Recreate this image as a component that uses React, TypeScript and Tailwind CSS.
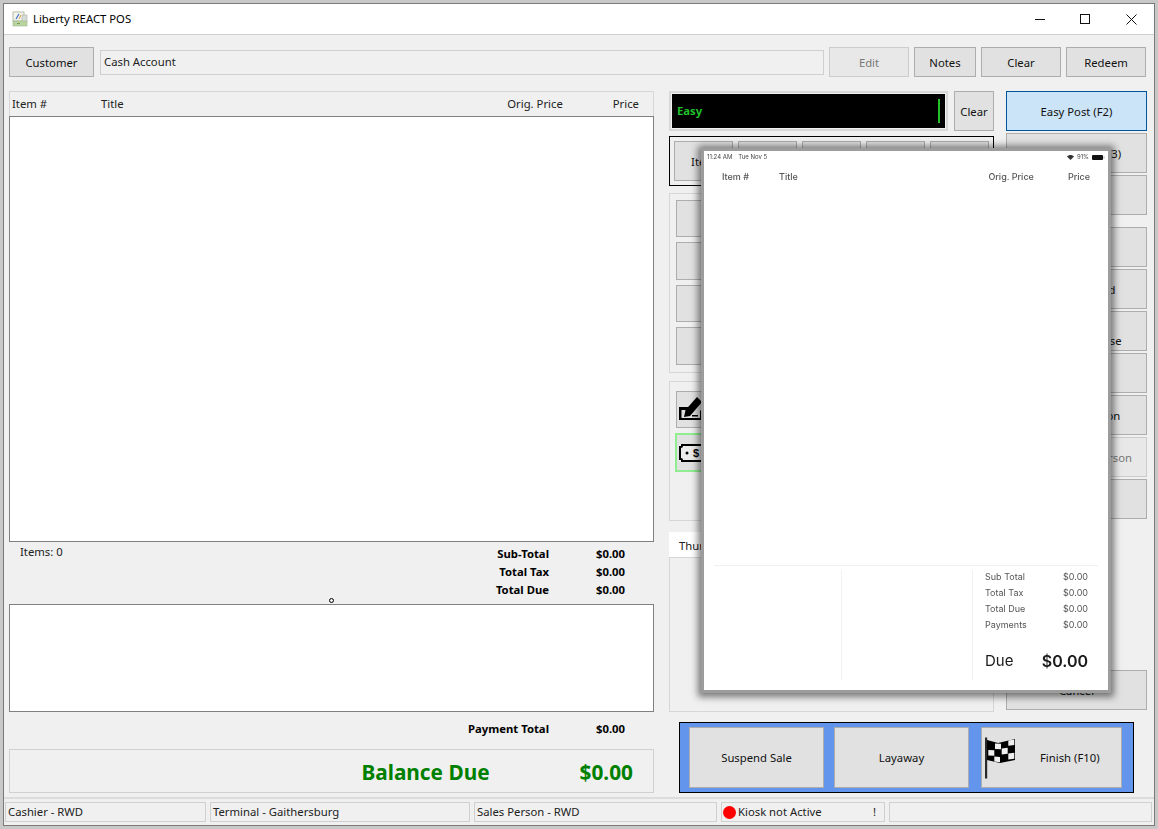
import type { ReactNode } from 'react'

function Btn({ className = '', children, disabled }: { className?: string; children?: ReactNode; disabled?: boolean }) {
  return (
    <button className={`flex flex-col items-center justify-center shrink-0 border pt-[1px] leading-[18px] ${disabled ? 'bg-[#e8e8e8] border-[#cccccc] text-[#777777]' : 'bg-[#e1e1e1] border-[#adadad] text-[#111111]'} ${className}`}>
      {children}
    </button>
  )
}

function TotalRow({ label, value, className = '' }: { label: string; value: string; className?: string }) {
  return (
    <div className={`flex justify-end items-center pr-[29px] ${className}`}>
      <span className="font-bold text-black">{label}</span>
      <span className="ml-[45px] w-[31px] text-right font-bold text-black">{value}</span>
    </div>
  )
}

function AppIcon() {
  return (
    <svg width="16" height="16" viewBox="0 0 16 16" className="shrink-0">
      <rect x="1" y="1" width="11" height="9" fill="#f4f4ee" stroke="#b5bfa6" />
      <path d="M4 8l3-5" stroke="#3a6fc4" strokeWidth="1.2" />
      <path d="M7 8l2-4" stroke="#d9a23a" strokeWidth="1" />
      <rect x="10" y="4" width="5" height="7" fill="#d8dcd8" stroke="#aab0aa" strokeWidth="0.6" />
      <rect x="1" y="10" width="14" height="5" fill="#b9d4a0" stroke="#9db888" strokeWidth="0.6" />
      <rect x="5" y="12" width="3" height="1" fill="#7b9a62" />
    </svg>
  )
}

function FlagIcon() {
  return (
    <svg width="34" height="42" viewBox="0 0 34 42">
      <rect x="1" y="0.500" width="2.200" height="41" fill="#2a2a2a" />
      <path d="M3 3l11 3 17-4v21l-15 3-13-3z" fill="#000" />
      <g fill="#f0f0f0">
        <path d="M11 6.500l6 .3v5.500l-6-.3z" />
        <path d="M17.700 11.500l6-.7v6l-6 .7z" />
        <path d="M24.300 3.500l6-1v5.500l-6 .8z" />
        <path d="M24.300 16.500l6-.8v6l-6 .8z" />
        <path d="M10.300 19.500l5.700.4v5.400l-5.700-.7z" />
        <path d="M4.300 13l6 .3v5.500l-6-.4z" />
      </g>
    </svg>
  )
}

function CheckIcon() {
  return (
    <svg width="24" height="26" viewBox="0 0 24 26">
      <path d="M1 10h10l-3 3H3.500v8H22v-7l2-2v11H1z" fill="#000" />
      <path d="M6 20l1.500-7L19 0l5 5-12 14z" fill="#000" />
      <path d="M14 18h6v1.500h-6z" fill="#000" />
    </svg>
  )
}

function CashIcon() {
  return (
    <svg width="26" height="18" viewBox="0 0 26 18">
      <rect x="0" y="0" width="26" height="18" fill="#000" />
      <path d="M4 2h22v14H4a2 2 0 0 0-2-2V4a2 2 0 0 0 2-2z" fill="#ececec" />
      <rect x="0" y="0" width="2" height="2" fill="#ececec" />
      <rect x="0" y="16" width="2" height="2" fill="#ececec" />
      <circle cx="8" cy="9" r="1.500" fill="#000" />
      <text x="14" y="13" fontSize="11" fontWeight="700" fontFamily="Liberation Sans, sans-serif" fill="#000">$</text>
    </svg>
  )
}

function TabletOverlay() {
  const totals = ['Sub Total', 'Total Tax', 'Total Due', 'Payments']
  return (
    <div className="absolute left-[701px] top-[148px] w-[410px] h-[545px] border-[3px] border-[#9c9c9c] bg-white flex flex-col shadow-[0_1px_7px_3px_rgba(0,0,0,0.5)] font-['Inter',sans-serif] text-[#555555]">
      <div className="flex justify-between items-center h-[10px] mt-[1px] pl-[3px] pr-[3px] text-[6px] leading-[10px] text-[#444444] blur-[0.25px]">
        <div className="flex gap-[6px]">
          <span>11:24 AM</span>
          <span>Tue Nov 5</span>
        </div>
        <div className="flex items-center gap-[3px]">
          <svg width="7" height="5" viewBox="0 0 7 5"><path d="M0 1.500C2 -.5 5 -.5 7 1.500L3.500 5z" fill="#333" /></svg>
          <span>91%</span>
          <svg width="13" height="5" viewBox="0 0 13 5"><rect x="0" y="0" width="11" height="5" rx="1" fill="#111" /><rect x="11.500" y="1.500" width="1" height="2" fill="#aaa" /></svg>
        </div>
      </div>
      <div className="flex items-center h-[12px] mt-[9px] pl-[18px] pr-[18px] text-[9px] font-medium leading-[12px] blur-[0.25px]">
        <span className="w-[57px]">Item #</span>
        <span className="flex-1">Title</span>
        <span>Orig. Price</span>
        <span className="ml-[34px]">Price</span>
      </div>
      <div className="flex-1" />
      <div className="mx-[10px] h-[1px] bg-[#f1f1f1]" />
      <div className="flex h-[110px] mt-[4px] ml-[10px] mr-[11px] mb-[10px]">
        <div className="w-[128px] border-r border-[#f1f1f1]" />
        <div className="w-[131px] border-r border-[#f1f1f1]" />
        <div className="flex-1 pl-[12px] pr-[9px] flex flex-col blur-[0.25px]">
          {totals.map(t => (
            <div key={t} className="flex justify-between items-center h-[16px] text-[9px] leading-[12px] first:mt-[-1px]">
              <span>{t}</span>
              <span>$0.00</span>
            </div>
          ))}
          <div className="flex justify-between items-center mt-[18px] text-[#1a1a1a]">
            <span className="text-[15px] leading-[20px]">Due</span>
            <span className="text-[16px] leading-[20px] font-semibold">$0.00</span>
          </div>
        </div>
      </div>
    </div>
  )
}

export default function App() {
  return (
    <div className="relative w-[1158px] h-[829px] overflow-hidden bg-[#c8c8c8] pt-[3px] pl-[3px] font-['Noto_Sans',sans-serif] text-[11.300px] text-[#222222]">
      <div className="w-[1152px] h-[823px] border border-[#7a7a7a] bg-[#f0f0f0] flex flex-col">
        {/* title bar */}
        <div className="flex items-center h-[31px] shrink-0 bg-white border-b border-[#cfcfcf] pl-[8px]">
          <AppIcon />
          <span className="ml-[5px] text-black">Liberty REACT POS</span>
          <div className="ml-auto flex items-center pr-[17px]">
            <svg width="10" height="10" viewBox="0 0 10 10"><path d="M0 5.500h10" stroke="#111" /></svg>
            <svg width="10" height="10" viewBox="0 0 10 10" className="ml-[35px]"><rect x=".5" y=".5" width="9" height="9" fill="none" stroke="#111" /></svg>
            <svg width="11" height="11" viewBox="0 0 11 11" className="ml-[36px]"><path d="M.5.500l10 10M10.500.500l-10 10" stroke="#111" /></svg>
          </div>
        </div>

        {/* customer row */}
        <div className="flex items-center h-[30px] mt-[12px] ml-[5px] shrink-0">
          <Btn className="w-[85px] h-[30px]">Customer</Btn>
          <div className="ml-[6px] w-[724px] h-[25px] border border-[#cfcfcf] flex items-center pl-[3px] pt-[1px]">Cash Account</div>
          <Btn disabled className="ml-[5px] w-[80px] h-[30px]">Edit</Btn>
          <Btn className="ml-[5px] w-[62px] h-[30px]">Notes</Btn>
          <Btn className="ml-[5px] w-[80px] h-[30px]">Clear</Btn>
          <Btn className="ml-[5px] w-[80px] h-[30px]">Redeem</Btn>
        </div>

        <div className="flex mt-[14px] ml-[5px] h-[702px] shrink-0">
          {/* left column */}
          <div className="w-[645px] flex flex-col">
            <div className="h-[25px] flex items-center border-t border-x border-[#d6d6d6] pl-[2px] pr-[14px]">
              <span className="w-[89px]">Item #</span>
              <span className="flex-1">Title</span>
              <span>Orig. Price</span>
              <span className="ml-[50px]">Price</span>
            </div>
            <div className="h-[426px] bg-white border border-[#808080]" />
            <div className="relative h-[62px] pt-[3px]">
              <span className="absolute left-[11px] top-[2px]">Items: 0</span>
              <TotalRow label="Sub-Total" value="$0.00" className="h-[18px]" />
              <TotalRow label="Total Tax" value="$0.00" className="h-[18px]" />
              <TotalRow label="Total Due" value="$0.00" className="h-[18px]" />
              <div className="absolute left-[320px] top-[56px] w-[5px] h-[5px] rounded-full border border-black" />
            </div>
            <div className="h-[108px] bg-white border border-[#808080]" />
            <TotalRow label="Payment Total" value="$0.00" className="h-[37px] pb-[3px]" />
            <div className="h-[44px] border border-[#d0d0d0] flex items-center justify-end pr-[20px] pt-[3px] font-bold text-[20.800px] text-[#008000]">
              <span>Balance Due</span>
              <span className="ml-[90px]">$0.00</span>
            </div>
          </div>

          {/* center column */}
          <div className="w-[325px] ml-[15px] flex flex-col">
            <div className="flex h-[40px]">
              <div className="w-[279px] border-2 border-[#d8d8d8] p-[1px]">
                <div className="h-full bg-black flex items-center justify-between pl-[5px] pr-[5px]">
                  <span className="font-bold text-[#22c02a] pt-[1px]">Easy</span>
                  <span className="w-[2px] h-[24px] bg-[#22c02a]" />
                </div>
              </div>
              <Btn className="ml-[6px] w-[40px] h-[40px]">Clear</Btn>
            </div>
            <div className="mt-[5px] h-[50px] border border-black flex items-center gap-[5px] pl-[4px]">
              <Btn className="w-[59px] h-[40px]">Item</Btn>
              <Btn className="w-[59px] h-[40px]" />
              <Btn className="w-[59px] h-[40px]" />
              <Btn className="w-[59px] h-[40px]" />
              <Btn className="w-[59px] h-[40px]" />
            </div>
            <div className="mt-[7px] h-[180px] border border-[#d6d6d6] pl-[6px] pt-[6px] flex flex-col gap-[5px]">
              <Btn className="w-[100px] h-[37px]" />
              <Btn className="w-[100px] h-[38px]" />
              <Btn className="w-[100px] h-[37px]" />
              <Btn className="w-[100px] h-[38px]" />
            </div>
            <div className="mt-[8px] h-[140px] border border-[#d6d6d6] pl-[6px] pt-[9px] flex flex-col gap-[5px]">
              <Btn className="w-[100px] h-[37px] !items-start pl-[1px] !pt-0"><CheckIcon /></Btn>
              <Btn className="w-[100px] h-[39px] !items-start pl-[2px] !pt-0 !border-2 !border-[#90ee90] ml-[-1px]"><CashIcon /></Btn>
            </div>
            <div className="mt-[11px] h-[25px] w-[120px] bg-white flex items-center pl-[10px] pt-[3px]">Thursday</div>
            <div className="h-[155px] border border-[#d6d6d6]" />
            <div className="mt-[10px] ml-[10px] w-[455px] h-[71px] bg-[#6495ed] border border-black flex items-start pl-[9px] pt-[4px]">
              <Btn className="w-[135px] h-[61px]">Suspend Sale</Btn>
              <Btn className="ml-[10px] w-[135px] h-[61px]">Layaway</Btn>
              <div className="ml-[12px] w-[141px] h-[61px] bg-[#e1e1e1] border border-[#adadad] flex items-center pl-[2px] text-[#111111]">
                <FlagIcon />
                <span className="ml-[22px] pt-[1px]">Finish (F10)</span>
              </div>
            </div>
          </div>

          {/* right column */}
          <div className="w-[141px] ml-[12px] flex flex-col">
            <Btn className="h-[40px] !bg-[#cce4f7] !border-[#005499]">Easy Post (F2)</Btn>
            <Btn className="h-[40px] mt-[2px]">Item Lookup (F3)</Btn>
            <Btn className="h-[40px] mt-[2px]" />
            <Btn className="h-[40px] mt-[12px]" />
            <Btn className="h-[40px] mt-[2px]">Issue Gift Card</Btn>
            <Btn className="h-[40px] mt-[2px]">Return<br />Vendor Purchase</Btn>
            <Btn className="h-[40px] mt-[2px]" />
            <Btn className="h-[40px] mt-[2px]">Void Transaction</Btn>
            <Btn disabled className="h-[40px] mt-[2px]">Change Sales Person</Btn>
            <Btn className="h-[40px] mt-[2px]" />
            <Btn className="h-[40px] mt-[151px]">Cancel</Btn>
          </div>
        </div>

        {/* status bar */}
        <div className="mt-[4px] flex-1 border-t-2 border-[#dcdcdc] pt-[3px] pl-[1px] flex gap-[4px]">
          <div className="w-[201px] h-[20px] border border-[#d0d0d0] flex items-center pl-[2px] pt-[1px]">Cashier - RWD</div>
          <div className="w-[260px] h-[20px] border border-[#d0d0d0] flex items-center pl-[2px] pt-[1px]">Terminal - Gaithersburg</div>
          <div className="w-[243px] h-[20px] border border-[#d0d0d0] flex items-center pl-[2px] pt-[1px]">Sales Person - RWD</div>
          <div className="w-[164px] h-[20px] border border-[#d0d0d0] flex items-center pl-[1px] pt-[1px]">
            <span className="w-[13px] h-[13px] rounded-full bg-[#ff0000]" />
            <span className="ml-[2px]">Kiosk not Active</span>
            <span className="ml-auto mr-[8px]">!</span>
          </div>
          <div className="w-[263px] h-[20px] border border-[#d0d0d0]" />
        </div>
      </div>
      <TabletOverlay />
    </div>
  )
}
